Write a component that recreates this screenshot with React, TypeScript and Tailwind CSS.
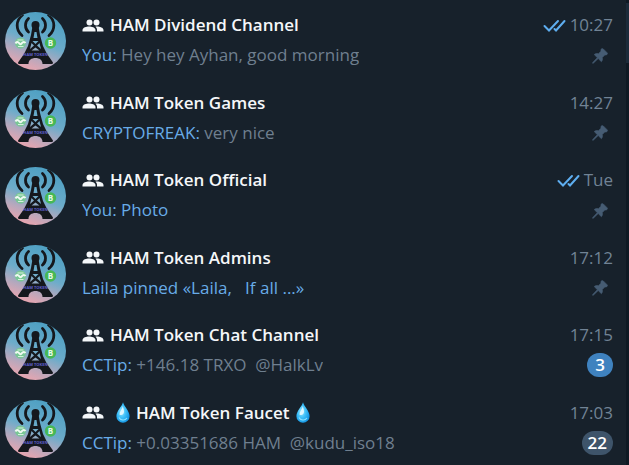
import { useId } from "react";

type Chat = {
  title: string;
  drops?: boolean;
  time: string;
  read?: boolean;
  sender?: string;
  text: string;
  highlight?: boolean;
  pinned?: boolean;
  unread?: number;
  muted?: boolean;
};

const chats: Chat[] = [
  { title: "HAM Dividend Channel", time: "10:27", read: true, sender: "You:", text: "Hey hey Ayhan, good morning", pinned: true },
  { title: "HAM Token Games", time: "14:27", sender: "CRYPTOFREAK:", text: "very nice", pinned: true },
  { title: "HAM Token Official", time: "Tue", read: true, sender: "You:", text: "Photo", highlight: true, pinned: true },
  { title: "HAM Token Admins", time: "17:12", text: "Laila pinned «Laila, \u00a0 If all ...»", highlight: true, pinned: true },
  { title: "HAM Token Chat Channel", time: "17:15", sender: "CCTip:", text: "+146.18 TRXO \u00a0@HalkLv", unread: 3 },
  { title: "HAM Token Faucet", drops: true, time: "17:03", sender: "CCTip:", text: "+0.03351686 HAM \u00a0@kudu_iso18", unread: 22, muted: true },
];

function Avatar() {
  const id = useId();
  return (
    <svg viewBox="0 0 61 58" className="h-[58px] w-[61px] shrink-0" aria-hidden="true">
      <defs>
        <linearGradient id={id + "s"} x1="0.7" y1="0" x2="0.3" y2="1">
          <stop offset="0" stopColor="#4c9fc2" />
          <stop offset="0.5" stopColor="#6cacca" />
          <stop offset="0.75" stopColor="#b6a8bd" />
          <stop offset="1" stopColor="#f0a5ae" />
        </linearGradient>
        <clipPath id={id + "c"}>
          <ellipse cx="30.5" cy="29" rx="30.5" ry="29" />
        </clipPath>
      </defs>
      <g clipPath={`url(#${id}c)`}>
        <rect width="61" height="58" fill={`url(#${id}s)`} />
        <g fill="none" stroke="#15181d" strokeWidth="2.800" strokeLinecap="round">
          <path d="M23.500 6.500C19.500 10 19.500 16.500 23.500 20M37.500 6.500c4 3.500 4 10 0 13.500" />
          <path d="M17.500 3C10.500 8.500 10.500 18 17 23.500M43.500 3c7 5.500 7 15 .5 20.500" />
        </g>
        <circle cx="30.500" cy="13" r="4" fill="#15181d" />
        <path
          d="M27.500 14h6l1.500 9 3 11 4 8 6 8.500-.5 1.500H37.500C37.500 48 34.500 46 30.500 46S23.500 48 23.500 52H13.500l-.5-1.500 6-8.500 4-8 3-11zM29.500 20l-1 6h4l-1-6zM27.500 29l3 3 3-3zM26.500 31l-1.500 6 4-3.500zM34.500 31l-2.500 2.500 4 3.500zM30.500 35.500l-4 3h8z"
          fill="#15181d"
          fillRule="evenodd"
        />
        <circle cx="15.500" cy="31" r="5.500" fill="#79c795" />
        <path d="M10.500 31.500c1-2 2.500-2 3.500-.5s2 1.500 3 0 2.500-1.500 3.500 0" stroke="#f0faf3" strokeWidth="2" fill="none" />
        <path d="M12.500 28h6M13 34.500h5.500" stroke="#d5f0de" strokeWidth="1.200" />
        <circle cx="45.500" cy="31" r="5.700" fill="#46b856" />
        <text x="45.500" y="34" textAnchor="middle" fontSize="8" fontWeight="700" fill="#e9f8ea">B</text>
        <text x="30.500" y="44" textAnchor="middle" fontSize="4" fontWeight="700" fill="#5f60cf">HAM TOKEN</text>
      </g>
    </svg>
  );
}

function GroupIcon() {
  return (
    <svg viewBox="0 0 22 13" className="h-[13px] w-[22px] shrink-0" fill="#f4f7f9" aria-hidden="true">
      <circle cx="7.500" cy="3.500" r="3" />
      <circle cx="14.500" cy="3.500" r="3" />
      <path d="M0.500 12.500v-1.500c0-2.500 4-3.500 6.500-3.500s6.500 1 6.500 3.500v1.500z" />
      <path d="M14 7.600c3-.3 7.500.9 7.500 3.400v1.500H15v-1.500c0-1.400-.5-2.500-1.500-3.300z" />
    </svg>
  );
}

function ReadIcon() {
  return (
    <svg viewBox="0 0 23 13" className="h-[13px] w-[23px]" fill="none" stroke="#5eaef0" strokeWidth="2" strokeLinecap="round" role="img" aria-label="Read">
      <path d="M1.500 7 6 11.500 15 2M11.500 10 13 11.500 21.500 2" />
    </svg>
  );
}

function PinIcon() {
  return (
    <svg viewBox="0 0 16 16" className="h-4 w-4" fill="#465c73" stroke="#465c73" strokeWidth="0.600" strokeLinejoin="round" role="img" aria-label="Pinned">
      <path d="M9.500.8c.6-.6 1.300-.4 1.800.1l3.800 3.800c.6.600.6 1.200 0 1.700-.7.700-1.600.7-2.300.6L10.300 9.600c.4 1.600.2 3-.9 4.100L6.200 10.600 1.300 15.200.6 15.300.7 14.600 5.300 9.700 2.200 6.600c1.100-1.100 2.600-1.300 4.200-.9L9 3.200c-.2-.8-.2-1.700.5-2.400z" />
    </svg>
  );
}

function Drop() {
  const id = useId();
  return (
    <svg viewBox="0 0 14 21" className="h-[21px] w-[14px]" aria-hidden="true">
      <defs>
        <radialGradient id={id} cx="0.4" cy="0.45" r="0.6">
          <stop offset="0" stopColor="#a5e9ff" />
          <stop offset="0.5" stopColor="#3fc0f8" />
          <stop offset="1" stopColor="#1597e5" />
        </radialGradient>
      </defs>
      <path d="M7 .3C8 4.500 13.600 9 13.600 14.200A6.600 6.500 0 0 1 .4 14.200C.4 9 6 4.500 7 .3z" fill={`url(#${id})`} />
      <path d="M6.800 4C6.500 7 3.500 9.500 3.500 12.500c2 1.500 4.500 0 4.500-3C8 7.500 7.200 6 6.800 4z" fill="#dff7ff" />
      <path d="M3 15.500c1.500 3 6 3.500 8 .5" stroke="#8ae0ff" strokeWidth="1.200" fill="none" />
    </svg>
  );
}

function ChatRow({ chat }: { chat: Chat }) {
  return (
    <li className="flex gap-4 pt-[11px] pr-[13px] pl-[5px]">
      <div className="pt-px">
        <Avatar />
      </div>
      <div className="min-w-0 flex-1">
        <div className="flex h-7 items-center justify-between">
          <h2 className="flex min-w-0 items-center gap-[6px] font-semibold whitespace-nowrap text-[#f5f7f9]">
            <GroupIcon />
            {chat.drops ? (
              <span className="flex items-center gap-[6px] pl-[6px]">
                <Drop />
                {chat.title}
                <Drop />
              </span>
            ) : (
              <span>{chat.title}</span>
            )}
          </h2>
          <div className="flex items-center gap-1 text-[#718395]">
            {chat.read && <ReadIcon />}
            <time>{chat.time}</time>
          </div>
        </div>
        <div className="flex h-8 items-center justify-between">
          <p className="truncate text-[#6f7f8f]">
            {chat.sender && <span className="text-[#68ace8]">{chat.sender} </span>}
            <span className={chat.highlight ? "text-[#68ace8]" : ""}>{chat.text}</span>
          </p>
          {chat.pinned && (
            <span className="pt-px pr-[5px]">
              <PinIcon />
            </span>
          )}
          {chat.unread && (
            <span
              className={`flex h-6 min-w-[26px] items-center justify-center rounded-full px-[6px] font-semibold text-white ${chat.muted ? "bg-[#3e546a]" : "bg-[#3f82bf]"}`}
            >
              {chat.unread}
            </span>
          )}
        </div>
      </div>
    </li>
  );
}

export default function App() {
  return (
    <main className="flex min-h-screen bg-[#17212b] font-['Open_Sans',sans-serif] text-[17px] leading-6">
      <ul className="grid min-w-0 flex-1 auto-rows-fr">
        {chats.map((chat) => (
          <ChatRow key={chat.title} chat={chat} />
        ))}
      </ul>
      <div className="w-[3px] bg-[#0f1923] pt-[3px]">
        <div className="h-[60px] bg-[#1c2b3a]" />
      </div>
    </main>
  );
}
